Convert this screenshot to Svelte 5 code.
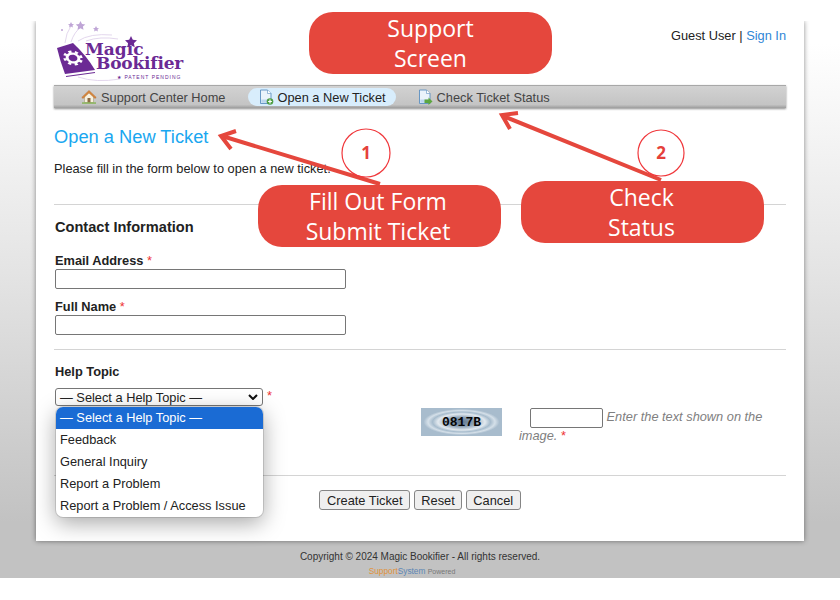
<script lang="ts">
	const topics = ['— Select a Help Topic —', 'Feedback', 'General Inquiry', 'Report a Problem', 'Report a Problem / Access Issue'];
</script>

<div class="page">
	<div class="card">
		<header class="head">
			<div class="logo">
				<svg class="logo-art" viewBox="0 0 132 64" width="132" height="64" aria-hidden="true">
					<g fill="none" stroke="#dccde8" stroke-width="0.8">
						<path d="M9 22 Q10 12 15 5" />
						<path d="M15 21 Q18 11 26 5" />
						<path d="M22 20 Q34 12 56 14" />
						<path d="M30 20 Q44 15 62 18" />
						<path d="M22 56 Q40 62 64 58" />
					</g>
					<g fill="#bfa5d6">
						<path d="M15 1l1 2 2 .2-1.500 1.400.4 2-1.900-1-1.900 1 .4-2L12 3.200 14 3z" />
						<path d="M24.500 0l1.500 3 3.300.4-2.400 2.200.6 3.200-3-1.600-3 1.600.6-3.200-2.400-2.200 3.300-.4z" />
						<path d="M40 5l1 2 2 .2-1.500 1.400.4 2-1.900-1-1.900 1 .4-2L37 7.200 39 7z" />
						<circle cx="6" cy="9" r="1" />
					</g>
					<path fill="#6b2a94" d="M75 15l1.800 3.800 4.200.5-3.100 2.900.8 4.100-3.700-2-3.700 2 .8-4.100-3.100-2.900 4.200-.5z" />
					<path fill="#6b2a94" d="M1 27 L17 22 Q30 34 39 49 L9 53 Q4 40 1 27Z" />
					<path fill="none" stroke="#6b2a94" stroke-width="1.200" d="M10 55.500 L39 51.500" />
					<g transform="translate(17 37) rotate(15) scale(1 .72)" fill="none" stroke="#fff">
						<circle r="6" stroke-width="3" />
						<circle r="8.500" stroke-width="3" stroke-dasharray="3.300 3.370" />
					</g>
				</svg>
				<span class="logo-word one">Magic</span>
				<span class="logo-word two">Bookifier</span>
				<span class="logo-note">★ PATENT PENDING</span>
			</div>
			<p class="user">Guest User | <a href="#top">Sign In</a></p>
		</header>

		<nav class="nav">
			<a class="nav-item home" href="#top">
				<svg viewBox="0 0 16 16" width="16" height="16" aria-hidden="true">
					<path fill="#f7f1df" stroke="#a89a78" stroke-width=".6" d="M3.500 7.500 8 3.500l4.500 4v6h-9z" />
					<path fill="#8c6a44" d="M6.500 9h3v4.500h-3z" />
					<path fill="#d98a3c" stroke="#b5652a" stroke-width=".5" d="M.8 8.400 8 1.500l7.200 6.900-1.200 1L8 3.800 2 9.400z" />
					<path fill="#7fb24a" d="M1 13.400h14v1.300H1z" />
				</svg>
				Support Center Home
			</a>
			<a class="nav-item active" href="#top">
				<svg viewBox="0 0 16 16" width="16" height="16" aria-hidden="true">
					<path fill="#eaf3fb" stroke="#5b8fc0" stroke-width=".9" d="M2.500 1h7l3.500 3.500V14.500h-10.500z" />
					<path fill="#bcd6ee" d="M3.300 10.500h9v3.300h-9z" />
					<path fill="#fff" stroke="#5b8fc0" stroke-width=".6" d="M9.500 1v3.500H13" />
					<circle cx="12" cy="12.500" r="3.300" fill="#4f9e45" />
					<path stroke="#fff" stroke-width="1.200" d="M12 10.600v3.800M10.100 12.500h3.800" />
				</svg>
				Open a New Ticket
			</a>
			<a class="nav-item status" href="#top">
				<svg viewBox="0 0 16 16" width="16" height="16" aria-hidden="true">
					<path fill="#eaf3fb" stroke="#5b8fc0" stroke-width=".9" d="M2.500 1h7l3.500 3.500V14.500h-10.500z" />
					<path fill="#bcd6ee" d="M3.300 10.500h9v3.300h-9z" />
					<path fill="#fff" stroke="#5b8fc0" stroke-width=".6" d="M9.500 1v3.500H13" />
					<path fill="#5da63f" d="M7.500 10.500h4V8.500l4 4-4 3.500v-2h-4z" />
				</svg>
				Check Ticket Status
			</a>
		</nav>

		<main class="content">
			<h1>Open a New Ticket</h1>
			<p class="intro">Please fill in the form below to open a new ticket.</p>
			<hr class="rule-contact" />
			<h2>Contact Information</h2>
			<label class="field first">
				<span>Email Address <em>*</em></span>
				<input type="text" />
			</label>
			<label class="field">
				<span>Full Name <em>*</em></span>
				<input type="text" />
			</label>
			<hr class="rule-topic" />
			<h3>Help Topic</h3>
			<div class="topic-row">
				<div class="select">
					<span>{topics[0]}</span>
					<svg viewBox="0 0 10 6" width="10" height="6" aria-hidden="true">
						<path fill="none" stroke="#111" stroke-width="2" d="M1 1l4 4 4-4" />
					</svg>
				</div>
				<em class="req">*</em>
			</div>
			<div class="captcha-row">
				<div class="captcha"><span>0817B</span></div>
				<p class="captcha-help">
					<input type="text" />
					<i>Enter the text shown on the image.</i> <em>*</em>
				</p>
			</div>
			<hr class="rule-actions" />
			<div class="actions">
				<button type="button" class="create">Create Ticket</button>
				<button type="button">Reset</button>
				<button type="button" class="cancel">Cancel</button>
			</div>
		</main>
	</div>

	<footer class="foot">
		<p>Copyright © 2024 Magic Bookifier - All rights reserved.</p>
		<p class="powered"><b>Support</b><strong>System</strong> <span>Powered</span></p>
	</footer>

	<ul class="menu">
		{#each topics as topic, i}
			<li class:picked={i === 0}>{topic}</li>
		{/each}
	</ul>

	<svg class="arrows" viewBox="0 0 840 600" width="840" height="600" aria-hidden="true">
		<g fill="none" stroke="#e5473d" stroke-width="4">
			<path d="M380 184 222 136M236 131l-15 5 10 13" />
			<path d="M661 180 503 116M518 113l-16 2 8 14" />
		</g>
		<g fill="none" stroke="#f0383c" stroke-width="1.200">
			<circle cx="366" cy="153" r="24" />
			<circle cx="661" cy="153" r="23" />
		</g>
	</svg>
	<span class="step one">1</span>
	<span class="step two">2</span>

	<div class="pill screen">Support<br />Screen</div>
	<div class="pill form">Fill Out Form<br />Submit Ticket</div>
	<div class="pill status">Check<br />Status</div>
</div>

<style>
	:global(body) {
		margin: 0;
		background: #fff;
	}

	.page {
		position: relative;
		width: 840px;
		height: 557px;
		margin-top: 21px;
		background: linear-gradient(#fff 4%, #e4e4e4 45%, #c2c2c2 90%);
		font-family: 'Liberation Sans', Arial, sans-serif;
		font-size: 12.800px;
		color: #222;
	}

	.card {
		width: 768px;
		height: 520px;
		margin: 0 36px;
		padding: 0 18px;
		box-sizing: border-box;
		background: #fff;
		box-shadow: 0 0 5px rgba(0, 0, 0, 0.45);
		clip-path: inset(0 -10px -10px -10px);
	}

	.head {
		display: flex;
		justify-content: space-between;
		height: 64px;
	}

	.logo {
		position: relative;
		width: 132px;
		height: 64px;
		margin-left: 2px;
		color: #6b2a94;
	}

	.logo-art {
		display: block;
	}

	.logo-word {
		position: absolute;
		font-family: 'DejaVu Serif', serif;
		font-weight: 700;
		line-height: 14px;
	}

	.logo-word.one {
		left: 29px;
		top: 21px;
		font-size: 17px;
	}

	.logo-word.two {
		left: 40px;
		top: 35px;
		font-size: 17px;
		letter-spacing: -0.2px;
	}

	.logo-note {
		position: absolute;
		left: 61px;
		top: 53px;
		font-size: 5px;
		letter-spacing: 1px;
		white-space: nowrap;
	}

	.user {
		margin: 8px 0 0;
		line-height: 14px;
	}

	.user a {
		color: #2f86d6;
		text-decoration: none;
	}

	.nav {
		display: flex;
		align-items: center;
		gap: 12px;
		height: 23px;
		padding-left: 17px;
		box-sizing: border-box;
		border-top: 1px solid #a8a8a8;
		background: linear-gradient(#d2d2d2, #c4c4c4 85%, #9c9c9c);
		box-shadow: 0 1px 2px rgba(0, 0, 0, 0.45);
	}

	.nav-item {
		display: flex;
		align-items: center;
		gap: 3px;
		height: 18px;
		padding: 0 10px;
		border-radius: 9px;
		color: #444;
		text-decoration: none;
		white-space: nowrap;
	}

	.nav-item.home {
		gap: 4px;
		padding-right: 11px;
	}

	.nav-item.status {
		gap: 4px;
		padding-left: 9px;
	}

	.nav-item.active {
		color: #222;
		background: #d8edfc;
	}

	h1 {
		margin: 18px 0 0;
		font-size: 18.300px;
		line-height: 22px;
		font-weight: 400;
		color: #1aa7f0;
	}

	.intro {
		margin: 12px 0 0;
		line-height: 18px;
	}

	hr {
		height: 1px;
		margin: 0;
		border: 0;
		background: #d4d4d4;
	}

	.rule-contact {
		margin-top: 26px;
	}

	h2 {
		margin: 13px 0 0 1px;
		font-size: 14.600px;
		line-height: 18px;
	}

	.field {
		display: block;
		margin: 11px 0 0 1px;
		font-weight: 700;
		line-height: 14px;
	}

	.field.first {
		margin-top: 18px;
	}

	.field span {
		display: block;
		margin-bottom: 1px;
	}

	em {
		color: #e33;
		font-style: normal;
		font-weight: 400;
	}

	input {
		display: block;
		box-sizing: border-box;
		width: 291px;
		height: 20px;
		margin: 0;
		border: 1px solid #767676;
		border-radius: 2px;
		background: #fff;
	}

	.rule-topic {
		margin-top: 14px;
	}

	h3 {
		margin: 15px 0 0 1px;
		font-size: 12.800px;
		line-height: 14px;
	}

	.topic-row {
		display: flex;
		gap: 4px;
		margin: 9px 0 0 1px;
	}

	.select {
		display: flex;
		align-items: center;
		justify-content: space-between;
		box-sizing: border-box;
		width: 208px;
		height: 18px;
		padding: 0 4px;
		border: 1px solid #767676;
		border-radius: 3px;
		white-space: nowrap;
	}

	.req {
		line-height: 16px;
	}

	.captcha-row {
		display: flex;
		gap: 17px;
		margin: 2px 0 0 367px;
	}

	.captcha {
		display: flex;
		align-items: center;
		justify-content: center;
		flex: none;
		width: 81px;
		height: 28px;
		background: radial-gradient(ellipse 38px 13px, #62788f 0, #8ea2b6 35%, #e2e9ef 62%, #a7bccd 76%, #d5e0e9 88%, #a8bccd 100%);
		color: #050505;
		font-family: 'Liberation Mono', monospace;
		font-size: 13px;
		font-weight: 700;
	}

	.captcha-help {
		margin: 0;
		width: 248px;
		line-height: 15px;
		color: #808080;
	}

	.captcha-help input {
		display: inline-block;
		width: 73px;
		margin-left: 11px;
		vertical-align: middle;
	}

	.rule-actions {
		margin-top: 32px;
	}

	.actions {
		display: flex;
		justify-content: center;
		gap: 4px;
		margin-top: 14px;
	}

	button {
		height: 20px;
		padding: 0 6px;
		border: 1px solid #858585;
		border-radius: 3px;
		background: #efefef;
		color: #222;
		font: 12.800px 'Liberation Sans', Arial, sans-serif;
	}

	button.create {
		min-width: 91px;
	}

	button.cancel {
		min-width: 55px;
	}

	.foot {
		margin-top: 9px;
		text-align: center;
		font-size: 10px;
		color: #333;
	}

	.foot p {
		margin: 0;
		line-height: 14px;
	}

	.powered {
		font-size: 8.300px;
	}

	.foot .powered {
		margin-right: 16px;
	}

	.powered b {
		color: #e0923a;
		font-weight: 400;
	}

	.powered strong {
		color: #5b86b5;
		font-weight: 400;
	}

	.powered span {
		color: #777;
		font-size: 7px;
	}

	.menu {
		position: absolute;
		left: 56px;
		top: 386px;
		box-sizing: border-box;
		width: 207px;
		height: 110px;
		margin: 0;
		padding: 0;
		overflow: hidden;
		list-style: none;
		border-radius: 7px;
		background: #fff;
		box-shadow: 0 0 0 1px rgba(0, 0, 0, 0.12), 0 6px 22px rgba(0, 0, 0, 0.35);
	}

	.menu li {
		height: 22px;
		padding-left: 4px;
		line-height: 22px;
		white-space: nowrap;
	}

	.menu .picked {
		background: #1a6bd4;
		color: #fff;
	}

	.arrows {
		position: absolute;
		left: 0;
		top: -21px;
		pointer-events: none;
	}

	.step {
		position: absolute;
		top: 120px;
		font: 700 17px/24px 'Open Sans', sans-serif;
		color: #e5403a;
		text-align: center;
		width: 20px;
	}

	.step.one {
		left: 356px;
	}

	.step.two {
		left: 651px;
	}

	.pill {
		position: absolute;
		display: flex;
		align-items: center;
		justify-content: center;
		box-sizing: border-box;
		width: 243px;
		height: 62px;
		border-radius: 24px;
		background: #e5473d;
		color: #fff;
		font: 400 23px/30px 'Open Sans', sans-serif;
		text-align: center;
	}

	.pill.screen {
		left: 309px;
		top: -9px;
	}

	.pill.form {
		left: 258px;
		top: 164px;
		padding-right: 3px;
	}

	.pill.status {
		left: 521px;
		top: 160px;
		padding-right: 2px;
	}
</style>
